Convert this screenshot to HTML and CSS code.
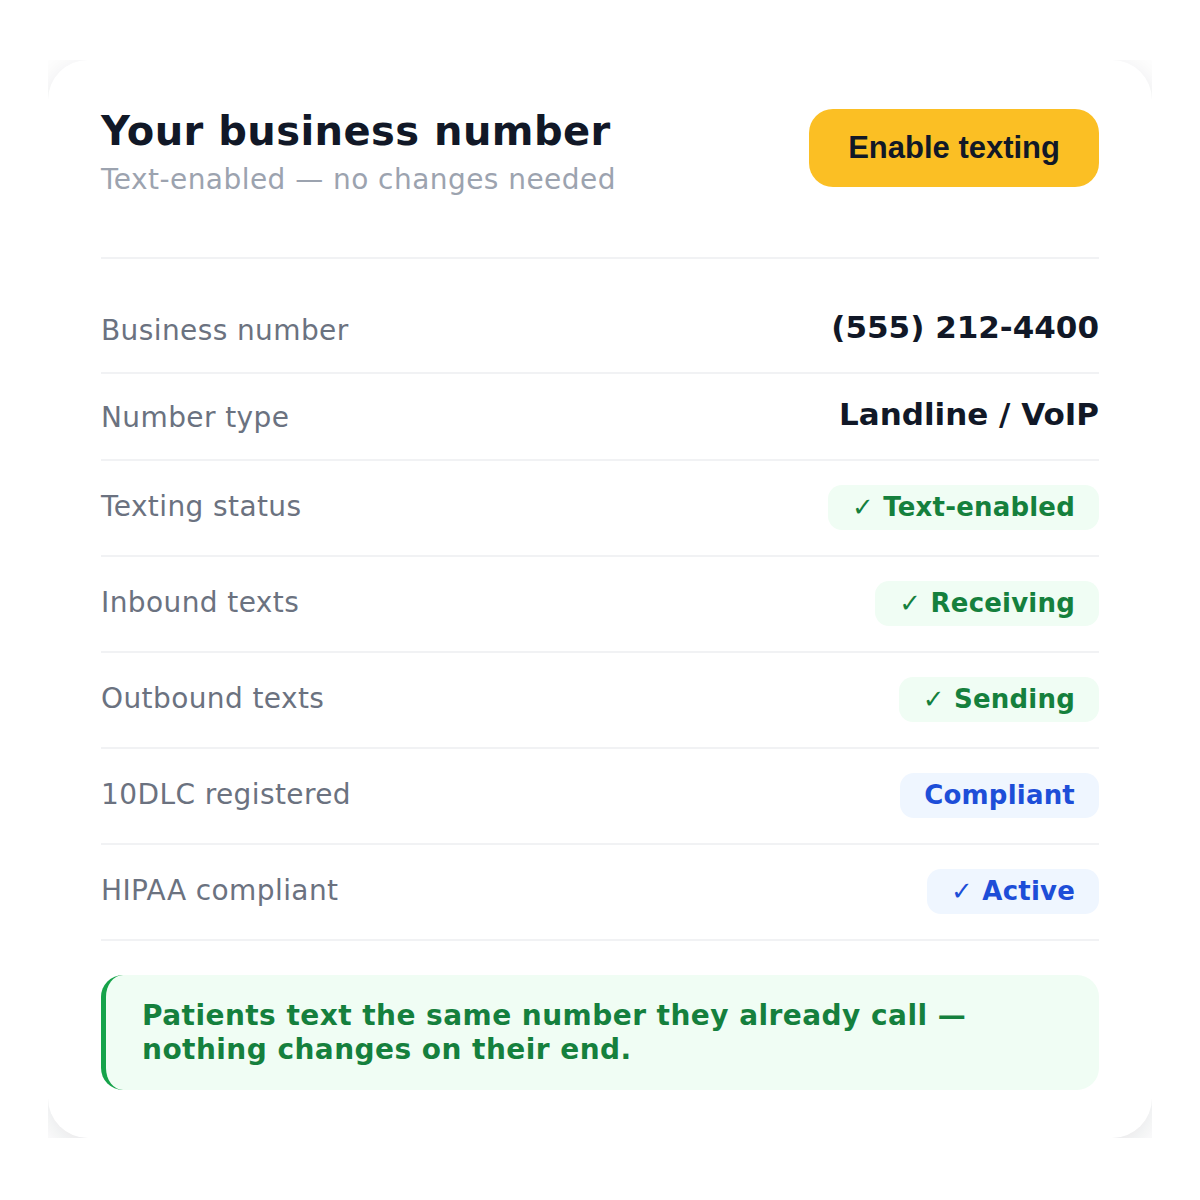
FILE: index.html
```html
<!DOCTYPE html>
<html lang="en">
<head>
<meta charset="utf-8">
<title>Your business number</title>
<link rel="stylesheet" href="styles.css">
</head>
<body>
<div class="frame">
  <div class="card">
    <div class="header">
      <div class="heading">
        <h1 class="title">Your business number</h1>
        <p class="subtitle">Text-enabled — no changes needed</p>
      </div>
      <button class="cta" type="button">Enable texting</button>
    </div>
    <div class="list">
      <div class="row">
        <span class="label">Business number</span>
        <span class="value"><span class="value-text">(555) 212-4400</span></span>
      </div>
      <div class="row">
        <span class="label">Number type</span>
        <span class="value"><span class="value-text">Landline / VoIP</span></span>
      </div>
      <div class="row">
        <span class="label">Texting status</span>
        <span class="pill pill-green"><span class="check">✓</span> Text-enabled</span>
      </div>
      <div class="row">
        <span class="label">Inbound texts</span>
        <span class="pill pill-green"><span class="check">✓</span> Receiving</span>
      </div>
      <div class="row">
        <span class="label">Outbound texts</span>
        <span class="pill pill-green"><span class="check">✓</span> Sending</span>
      </div>
      <div class="row">
        <span class="label">10DLC registered</span>
        <span class="pill pill-blue">Compliant</span>
      </div>
      <div class="row">
        <span class="label">HIPAA compliant</span>
        <span class="pill pill-blue"><span class="check">✓</span> Active</span>
      </div>
    </div>
    <div class="callout">Patients text the same number they already call — nothing changes on their end.</div>
  </div>
</div>
</body>
</html>
```
FILE: styles.css
```css
html, body {
  margin: 0;
  padding: 0;
  background: #ffffff;
}

body {
  font-family: "DejaVu Sans", sans-serif;
}

.frame {
  margin: 60px 48px 0;
  height: 1078px;
  overflow: hidden;
}

.card {
  box-sizing: border-box;
  height: 100%;
  background: #ffffff;
  border-radius: 40px;
  box-shadow: 0 8px 32px rgba(15, 23, 42, 0.12);
  padding: 48px 53px 48px;
}

.header {
  display: flex;
  justify-content: space-between;
  align-items: flex-start;
  padding-bottom: 61px;
  border-bottom: 2px solid #f1f2f4;
}

.title {
  margin: 0;
  font-size: 40px;
  font-weight: 700;
  line-height: 46px;
  letter-spacing: 0.45px;
  color: #111827;
}

.subtitle {
  margin: 9px 0 0;
  font-size: 28px;
  line-height: 33px;
  letter-spacing: 0.45px;
  color: #9ca3af;
}

.cta {
  margin-top: 1px;
  height: 78px;
  padding: 0 39px;
  border: none;
  border-radius: 24px;
  background: #fbbf24;
  color: #111827;
  font-family: "Liberation Sans", Arial, sans-serif;
  font-weight: 700;
  font-size: 31px;
}

.list {
  margin-top: 28px;
}

.row {
  display: flex;
  justify-content: space-between;
  align-items: baseline;
  padding: 24px 0 25px;
  border-bottom: 2px solid #f1f2f4;
}

.label {
  font-size: 28px;
  line-height: 33px;
  letter-spacing: 0.4px;
  color: #6b7280;
}

.value {
  font-size: 31px;
  line-height: 33px;
  font-weight: 700;
  color: #111827;
}

.value-text {
  vertical-align: 2px;
}

.pill {
  display: inline-block;
  padding: 7px 24px;
  border-radius: 14px;
  font-size: 26px;
  line-height: 31px;
  font-weight: 700;
  letter-spacing: 0.2px;
}

.check {
  font-weight: 400;
}

.pill-green {
  background: #f0fdf4;
  color: #15803d;
}

.pill-blue {
  background: #eff6ff;
  color: #1d4ed8;
}

.callout {
  margin-top: 34px;
  padding: 24px 36px 24px 36px;
  border-left: 5px solid #16a34a;
  border-radius: 22px;
  background: #f0fdf4;
  color: #15803d;
  font-size: 28px;
  line-height: 33.5px;
  font-weight: 700;
  letter-spacing: 0.45px;
}
```
